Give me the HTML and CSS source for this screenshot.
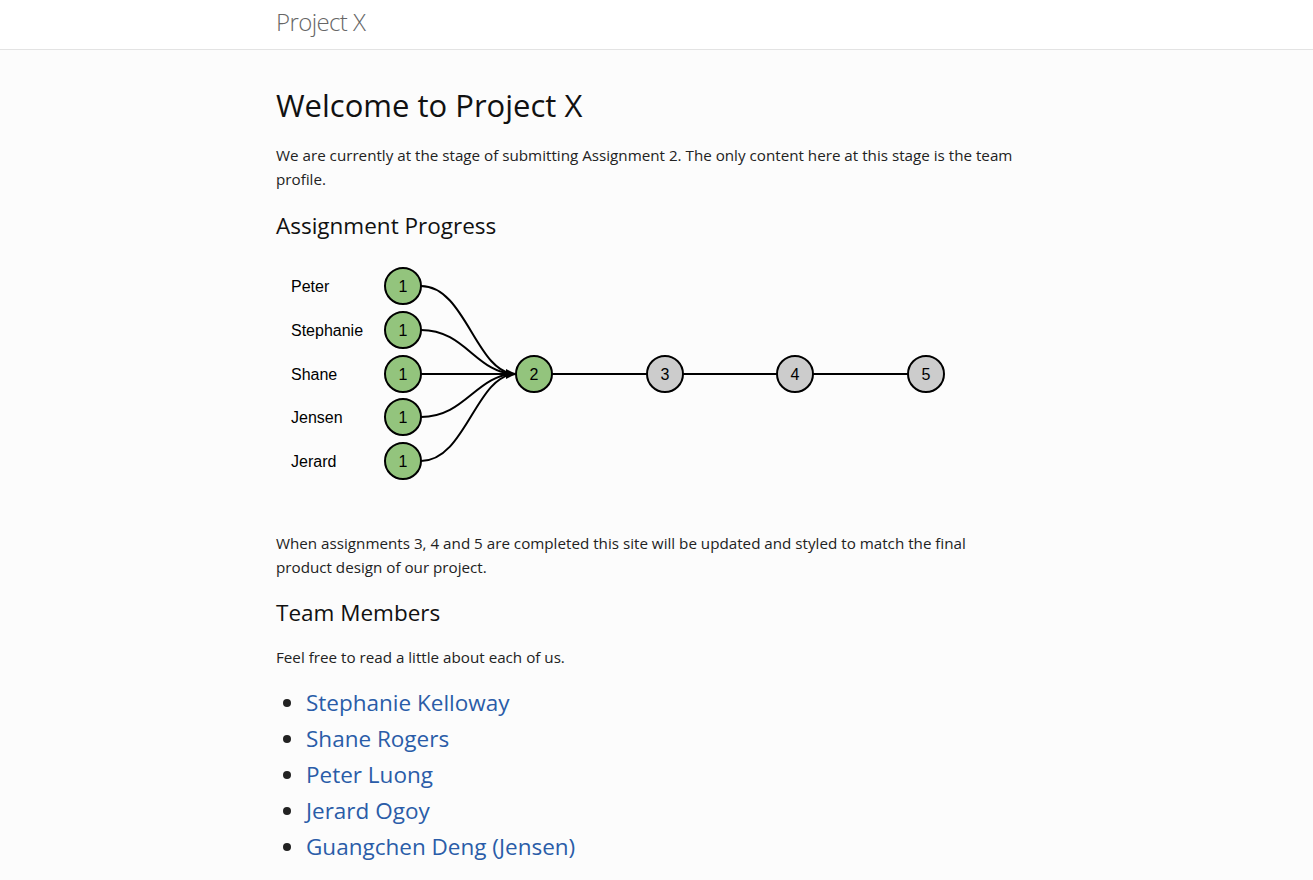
FILE: index.html
```html
<!DOCTYPE html>
<html lang="en">
<head>
<meta charset="utf-8">
<title>Project X</title>
<link rel="stylesheet" href="styles.css">
</head>
<body>
<header class="topbar">
  <div class="container">
    <a class="brand" href="#">Project X</a>
  </div>
</header>
<main class="container">
  <h1 class="title">Welcome to Project X</h1>
  <p class="text">We are currently at the stage of submitting Assignment 2. The only content here at this stage is the team profile.</p>
  <h2 class="section">Assignment Progress</h2>
  <svg class="diagram" width="700" height="270" viewBox="0 0 700 270" xmlns="http://www.w3.org/2000/svg">
    <g fill="none" stroke="#000" stroke-width="2">
      <path d="M145 35 C190 35 200 123 240 123"/>
      <path d="M145 79 C190 79 200 123 240 123"/>
      <path d="M145 123 L240 123"/>
      <path d="M145 166 C190 166 200 123 240 123"/>
      <path d="M145 210 C190 210 200 123 240 123"/>
      <path d="M276 123 L371 123"/>
      <path d="M407 123 L501 123"/>
      <path d="M537 123 L632 123"/>
    </g>
    <path d="M230 118 L240 123 L230 128 Z" fill="#000"/>
    <g stroke="#000" stroke-width="2" fill="#93c47d">
      <circle cx="127" cy="35" r="18"/>
      <circle cx="127" cy="79" r="18"/>
      <circle cx="127" cy="123" r="18"/>
      <circle cx="127" cy="166" r="18"/>
      <circle cx="127" cy="210" r="18"/>
      <circle cx="258" cy="123" r="18"/>
    </g>
    <g stroke="#000" stroke-width="2" fill="#cccccc">
      <circle cx="389" cy="123" r="18"/>
      <circle cx="519" cy="123" r="18"/>
      <circle cx="650" cy="123" r="18"/>
    </g>
    <g class="node-num" text-anchor="middle">
      <text x="127" y="41">1</text>
      <text x="127" y="85">1</text>
      <text x="127" y="129">1</text>
      <text x="127" y="172">1</text>
      <text x="127" y="216">1</text>
      <text x="258" y="129">2</text>
      <text x="389" y="129">3</text>
      <text x="519" y="129">4</text>
      <text x="650" y="129">5</text>
    </g>
    <g class="node-label">
      <text x="15" y="41">Peter</text>
      <text x="15" y="85">Stephanie</text>
      <text x="15" y="129">Shane</text>
      <text x="15" y="172">Jensen</text>
      <text x="15" y="216">Jerard</text>
    </g>
  </svg>
  <p class="text">When assignments 3, 4 and 5 are completed this site will be updated and styled to match the final product design of our project.</p>
  <h2 class="section section-team">Team Members</h2>
  <p class="text text-intro">Feel free to read a little about each of us.</p>
  <ul class="members">
    <li><a href="#">Stephanie Kelloway</a></li>
    <li><a href="#">Shane Rogers</a></li>
    <li><a href="#">Peter Luong</a></li>
    <li><a href="#">Jerard Ogoy</a></li>
    <li><a href="#">Guangchen Deng (Jensen)</a></li>
  </ul>
</main>
</body>
</html>
```
FILE: styles.css
```css
html, body {
  margin: 0;
  padding: 0;
}
body {
  background: #fcfcfc;
  color: #222;
  font-family: "Open Sans", "Noto Sans", sans-serif;
  font-size: 15.2px;
}
.container {
  width: 740px;
  margin: 0 0 0 276px;
}
.topbar {
  background: #fff;
  border-bottom: 1px solid #e3e3e3;
  height: 49px;
}
.brand {
  display: block;
  font-weight: 300;
  font-size: 24px;
  letter-spacing: -0.6px;
  line-height: 43px;
  color: #666;
  text-decoration: none;
}
.title {
  margin: 35px 0 0;
  font-size: 31px;
  font-weight: 400;
  line-height: 40px;
  color: #111;
}
.text {
  margin: 18px 0 0;
  line-height: 24px;
}
.section {
  margin: 20px 0 0;
  font-size: 22.5px;
  font-weight: 400;
  line-height: 30px;
  color: #111;
}
.section-team {
  margin-top: 19px;
}
.text-intro {
  margin-top: 17px;
}
.diagram {
  display: block;
  margin: 10px 0 0;
}
.diagram .node-num text {
  font-family: "Liberation Sans", Arial, sans-serif;
  font-size: 16px;
  fill: #000;
}
.diagram .node-label text {
  font-family: "Liberation Sans", Arial, sans-serif;
  font-size: 16px;
  fill: #000;
}
.diagram + .text {
  margin-top: 10px;
}
.members {
  margin: 16px 0 0;
  padding: 0 0 0 30px;
  list-style: disc;
}
.members li {
  font-size: 22.5px;
  line-height: 36px;
}
.members a {
  color: #2a5ca8;
  text-decoration: none;
}
```
